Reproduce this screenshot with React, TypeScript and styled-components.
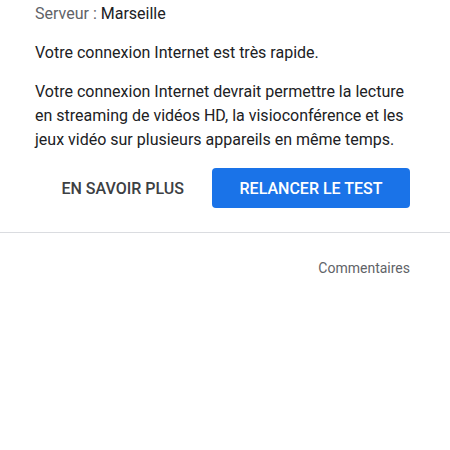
import styled, { createGlobalStyle } from "styled-components";

const GlobalStyle = createGlobalStyle`
  html, body {
    margin: 0;
    padding: 0;
    background: #ffffff;
  }
  body {
    font-family: Roboto, "Noto Sans", "Liberation Sans", sans-serif;
    -webkit-font-smoothing: antialiased;
  }
`;

export default function App() {
  return (
    <Page>
      <GlobalStyle />
      <Content>
        <ServerLine>
          <ServerLabel>Serveur : </ServerLabel>
          <ServerName>Marseille</ServerName>
        </ServerLine>
        <Summary>Votre connexion Internet est très rapide.</Summary>
        <Description>
          Votre connexion Internet devrait permettre la lecture en streaming de
          vidéos HD, la visioconférence et les jeux vidéo sur plusieurs
          appareils en même temps.
        </Description>
        <Actions>
          <TextButton>EN SAVOIR PLUS</TextButton>
          <PrimaryButton>RELANCER LE TEST</PrimaryButton>
        </Actions>
      </Content>
      <Divider />
      <Footer>
        <FeedbackLink>Commentaires</FeedbackLink>
      </Footer>
    </Page>
  );
}

const Page = styled.div`
  width: 450px;
  height: 450px;
  overflow: hidden;
  background: #ffffff;
`;

const Content = styled.div`
  padding: 4px 40px 0 35px;
`;

const ServerLine = styled.div`
  font-size: 16px;
  line-height: 20px;
`;

const ServerLabel = styled.span`
  color: #5f6368;
`;

const ServerName = styled.span`
  color: #202124;
`;

const Summary = styled.p`
  margin: 19px 0 0;
  font-size: 16px;
  line-height: 20px;
  color: #202124;
`;

const Description = styled.p`
  margin: 17px 0 0;
  font-size: 16px;
  line-height: 24px;
  color: #202124;
`;

const Actions = styled.div`
  display: flex;
  justify-content: flex-end;
  align-items: center;
  gap: 28px;
  margin-top: 16px;
`;

const TextButton = styled.button`
  border: none;
  background: none;
  padding: 0;
  font-family: inherit;
  font-size: 16px;
  font-weight: 500;
  color: #3c4043;
  cursor: pointer;
`;

const PrimaryButton = styled.button`
  width: 198px;
  height: 40px;
  border: none;
  border-radius: 4px;
  background: #1a73e8;
  color: #ffffff;
  font-family: inherit;
  font-size: 16px;
  font-weight: 500;
  cursor: pointer;
`;

const Divider = styled.hr`
  margin: 24px 0 0;
  border: none;
  border-top: 1px solid #dadce0;
`;

const Footer = styled.div`
  display: flex;
  justify-content: flex-end;
  padding: 26px 40px 0;
`;

const FeedbackLink = styled.a`
  font-size: 14px;
  line-height: 18px;
  color: #5f6368;
  cursor: pointer;
`;
